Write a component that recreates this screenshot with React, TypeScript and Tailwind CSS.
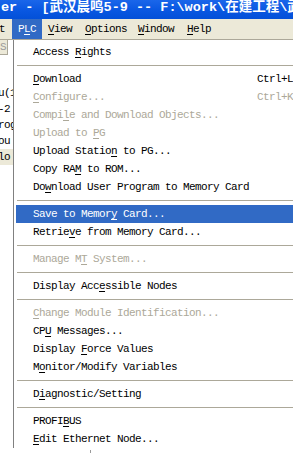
import React from 'react';

type Item =
  | { kind: 'sep' }
  | { kind: 'item'; label: string; shortcut?: string; disabled?: boolean; active?: boolean };

const MENU: Item[] = [
  { kind: 'item', label: 'Access &Rights' },
  { kind: 'sep' },
  { kind: 'item', label: '&Download', shortcut: 'Ctrl+L' },
  { kind: 'item', label: '&Configure...', shortcut: 'Ctrl+K', disabled: true },
  { kind: 'item', label: 'Compi&le and Download Objects...', disabled: true },
  { kind: 'item', label: 'Upload to &PG', disabled: true },
  { kind: 'item', label: 'Upload Statio&n to PG...' },
  { kind: 'item', label: 'Copy RA&M to ROM...' },
  { kind: 'item', label: 'Do&wnload User Program to Memory Card' },
  { kind: 'sep' },
  { kind: 'item', label: 'Save to Memor&y Card...', active: true },
  { kind: 'item', label: 'Retrie&ve from Memory Card...' },
  { kind: 'sep' },
  { kind: 'item', label: 'Manage M&T System...', disabled: true },
  { kind: 'sep' },
  { kind: 'item', label: 'Display Acc&essible Nodes' },
  { kind: 'sep' },
  { kind: 'item', label: '&Change Module Identification...', disabled: true },
  { kind: 'item', label: 'CP&U Messages...' },
  { kind: 'item', label: 'Display &Force Values' },
  { kind: 'item', label: 'M&onitor/Modify Variables' },
  { kind: 'sep' },
  { kind: 'item', label: 'D&iagnostic/Setting' },
  { kind: 'sep' },
  { kind: 'item', label: 'PROFI&BUS' },
  { kind: 'item', label: '&Edit Ethernet Node...' },
];

const TREE = ['u(1', '-2', 'rog', 'ou', 'lo'];

// "&" marks the mnemonic letter
const Label: React.FC<{ text: string }> = ({ text }) => {
  const i = text.indexOf('&');
  if (i < 0) return <>{text}</>;
  return (
    <>
      {text.slice(0, i)}
      <span className="underline underline-offset-2 decoration-1">{text[i + 1]}</span>
      {text.slice(i + 2)}
    </>
  );
};

const MenuBarItem: React.FC<{ label: string; width: string; active?: boolean }> = ({ label, width, active }) => (
  <div
    className={`${width} h-full pl-[6px] leading-[20px] whitespace-nowrap ${
      active ? 'bg-[#316AC5] text-white pl-[5px]' : 'text-black'
    }`}
  >
    <Label text={label} />
  </div>
);

export default function App() {
  return (
    <div
      className="w-[293px] h-[453px] overflow-hidden bg-white flex flex-col text-[11px] tracking-[-0.6px]"
      style={{ fontFamily: '"Liberation Mono", "Noto Sans CJK SC", monospace' }}
    >
      {/* title bar */}
      <div className="h-[19px] shrink-0 bg-gradient-to-b from-[#1a66ea] via-[#0a58e2] to-[#0350d8] text-white font-bold text-[13.5px] tracking-[0px] leading-[15px] whitespace-nowrap pl-[1px]">
        {'er - [武汉晨鸣5-9 -- F:\\work\\在建工程\\武'}
      </div>

      {/* menu bar */}
      <div className="h-[20px] shrink-0 bg-[#ECE9D8] flex items-stretch">
        <div className="w-[13px] leading-[20px] pl-0 -ml-[1px]">t</div>
        <MenuBarItem label="P&LC" width="w-[30px]" active />
        <MenuBarItem label="&View" width="w-[37px]" />
        <MenuBarItem label="&Options" width="w-[53px]" />
        <MenuBarItem label="&Window" width="w-[49px]" />
        <MenuBarItem label="&Help" width="w-[40px]" />
      </div>
      <div className="h-px shrink-0 bg-[#ACA899]" />

      <div className="flex flex-1 min-h-0">
        {/* window content behind the menu */}
        <div className="w-[13px] shrink-0 flex flex-col">
          <div className="w-[8px] h-[15px] bg-[#ECE9D8] border-r border-b border-[#ACA899] text-[#9a9a9a] leading-[14px] overflow-hidden">
            S
          </div>
          <div className="mt-[30px] flex flex-col">
            {TREE.map((t, i) => (
              <div
                key={t}
                className={`h-[16px] leading-[16px] whitespace-nowrap overflow-hidden -ml-[2px] ${
                  i === TREE.length - 1 ? 'bg-[#ECE9D8]' : ''
                }`}
              >
                {t}
              </div>
            ))}
          </div>
        </div>

        {/* dropdown */}
        <div className="flex-1 flex flex-col">
          <div className="w-[300px] border-l border-[#808080] pt-[3px] pl-[2px] flex flex-col">
            {MENU.map((m, i) =>
              m.kind === 'sep' ? (
                <div key={i} className="h-[9px] pt-[4px] pl-[1px]">
                  <div className="h-px bg-[#ACA899]" />
                </div>
              ) : (
                <div
                  key={i}
                  className={`h-[18px] leading-[18px] flex whitespace-nowrap pl-[17px] ${
                    m.active ? 'bg-[#316AC5] text-white' : m.disabled ? 'text-[#ACA899]' : 'text-black'
                  }`}
                >
                  <span className="w-[224px] shrink-0">
                    <Label text={m.label} />
                  </span>
                  {m.shortcut && <span>{m.shortcut}</span>}
                </div>
              )
            )}
          </div>
          <div className="h-[5px] pl-[77px]">
            <div className="w-px h-[3px] mt-[2px] bg-[#9a9a9a]" />
          </div>
        </div>
      </div>
    </div>
  );
}
